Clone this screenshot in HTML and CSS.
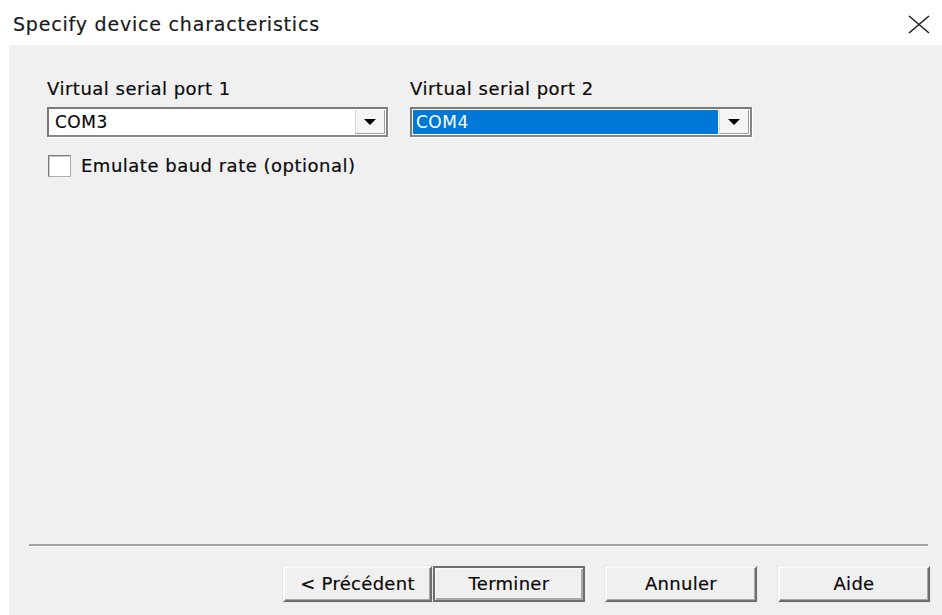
FILE: index.html
```html
<!DOCTYPE html>
<html lang="en">
<head>
<meta charset="utf-8">
<title>Specify device characteristics</title>
<link rel="stylesheet" href="styles.css">
</head>
<body>
<div class="dialog">
  <header class="titlebar">
    <span class="title">Specify device characteristics</span>
    <span class="close" aria-label="Close">
      <svg width="22" height="19" viewBox="0 0 22 19"><path d="M1 1 L21 18 M21 1 L1 18" stroke="#222" stroke-width="1.6" fill="none"/></svg>
    </span>
  </header>
  <main class="panel">
    <div class="fields">
      <div class="field field-a">
        <label class="label">Virtual serial port 1</label>
        <div class="combo">
          <span class="combo-value">COM3</span>
          <span class="combo-btn"><span class="arrow"></span></span>
        </div>
      </div>
      <div class="field field-b">
        <label class="label">Virtual serial port 2</label>
        <div class="combo">
          <span class="combo-value selected">COM4</span>
          <span class="combo-btn"><span class="arrow"></span></span>
        </div>
      </div>
    </div>
    <div class="check-row">
      <span class="checkbox"></span>
      <span class="check-label">Emulate baud rate (optional)</span>
    </div>
    <div class="spacer"></div>
    <div class="separator"></div>
    <div class="buttons">
      <button class="btn btn-prev">&lt; Précédent</button>
      <button class="btn btn-default">Terminer</button>
      <button class="btn btn-cancel">Annuler</button>
      <button class="btn btn-help">Aide</button>
    </div>
  </main>
</div>
</body>
</html>
```

FILE: styles.css
```css
html, body {
  margin: 0;
  padding: 0;
  background: #ffffff;
}

body {
  font-family: "DejaVu Sans", Verdana, sans-serif;
  font-size: 18px;
  letter-spacing: 0.5px;
  color: #0a0a0a;
  -webkit-text-stroke: 0.2px currentColor;
}

.dialog {
  width: 942px;
  height: 615px;
  display: flex;
  flex-direction: column;
  overflow: hidden;
}

/* window caption */
.titlebar {
  height: 45px;
  flex: none;
  display: flex;
  align-items: center;
  justify-content: space-between;
  padding: 0 12px 0 13px;
  background: #fff;
}

.title {
  font-size: 19px;
  letter-spacing: 0.8px;
  color: #1a1a1a;
  margin-top: 2px;
}

.close {
  display: flex;
  margin-top: 3px;
}

/* client area */
.panel {
  flex: 1;
  margin-left: 9px;
  background: #f0f0f0;
  display: flex;
  flex-direction: column;
  padding: 33px 0 13px 0;
}

.fields {
  display: flex;
  gap: 22px;
  padding-left: 38px;
}

.field {
  display: flex;
  flex-direction: column;
}

.field-a { width: 341px; }
.field-b { width: 342px; }

.label {
  line-height: 22px;
  margin-bottom: 7px;
}

/* drop-down list */
.combo {
  height: 30px;
  box-sizing: border-box;
  display: flex;
  align-items: stretch;
  background: #fff;
  border: 2px solid;
  border-color: #7a7a7a #858585 #858585 #7a7a7a;
  box-shadow: 1px 1px 0 #fff;
  padding: 1px;
}

.combo-value {
  flex: 1;
  display: flex;
  align-items: center;
  padding-left: 5px;
  font-size: 17px;
  letter-spacing: 0.5px;
}

.combo-value.selected {
  background: #0078d7;
  color: #fff;
  padding-left: 3px;
  margin-right: 1px;
  -webkit-text-stroke: 0;
}

.combo-btn {
  width: 30px;
  box-sizing: border-box;
  background: #f4f4f4;
  border-left: 1px solid #d8d8d8;
  border-right: 1px solid #a0a0a0;
  border-bottom: 1px solid #a0a0a0;
  display: flex;
  align-items: center;
  justify-content: center;
}

.arrow {
  width: 0;
  height: 0;
  border-left: 6px solid transparent;
  border-right: 6px solid transparent;
  border-top: 6px solid #000;
  margin-top: 1px;
}

/* checkbox */
.check-row {
  display: flex;
  align-items: center;
  gap: 10px;
  margin-top: 18px;
  padding-left: 39px;
}

.checkbox {
  width: 23px;
  height: 22px;
  box-sizing: border-box;
  background: #fff;
  border: 1px solid;
  border-color: #7d7d7d #b0b0b0 #b0b0b0 #7d7d7d;
  box-shadow: inset 1px 1px #c8c8c8;
}

.check-label {
  margin-top: -1px;
}

.spacer {
  flex: 1;
}

.separator {
  height: 2px;
  background: #a3a3a3;
  border-bottom: 1px solid #fdfdfd;
  margin: 0 14px 19px 20px;
}

/* command buttons */
.buttons {
  display: flex;
  justify-content: flex-end;
  padding-right: 12px;
}

.btn {
  height: 36px;
  width: 152px;
  box-sizing: border-box;
  font-family: "DejaVu Sans", Verdana, sans-serif;
  font-size: 18px;
  letter-spacing: 0.3px;
  color: #0a0a0a;
  -webkit-text-stroke: 0.2px currentColor;
  background: #f0f0f0;
  border: 2px solid;
  border-color: #fbfbfb #6e6e6e #6e6e6e #fbfbfb;
  box-shadow: inset -1px -1px #a8a8a8, 0 0 0 1px #e6e6e6;
  padding: 0 0 2px 0;
  text-align: center;
}

.btn-prev {
  width: 149px;
}

.btn-default {
  margin-left: 1px;
  border-color: #6e6e6e;
  box-shadow: inset 1px 1px #fbfbfb, inset -2px -2px #a8a8a8;
}

.btn-cancel {
  margin-left: 20px;
}

.btn-help {
  margin-left: 21px;
}
```
